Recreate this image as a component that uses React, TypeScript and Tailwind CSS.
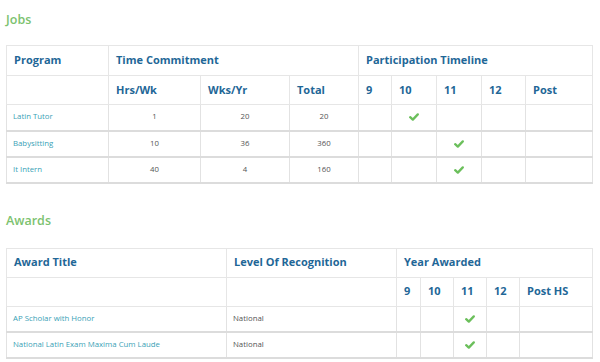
import React from 'react';

const font = { fontFamily: '"Open Sans", "Noto Sans", sans-serif' };

function Check() {
  return (
    <svg width="10" height="8" viewBox="0 0 10 8" className="mx-auto block">
      <path d="M1.2 4.2 L3.8 6.6 L8.8 1.4" fill="none" stroke="#6bbf5b" strokeWidth="2.3" strokeLinecap="round" strokeLinejoin="round" />
    </svg>
  );
}

const th = 'border border-[#e6e6e6] px-[7px] text-left align-middle text-[11px] font-bold text-[#1f6797]';
const td = 'border border-[#e2e2e2] align-middle text-[7.8px]';

const jobs = [
  { name: 'Latin Tutor', hrs: 1, wks: 20, total: 20, year: 1 },
  { name: 'Babysitting', hrs: 10, wks: 36, total: 360, year: 2 },
  { name: 'It Intern', hrs: 40, wks: 4, total: 160, year: 2 },
];

const awards = [
  { title: 'AP Scholar with Honor', level: 'National', year: 2 },
  { title: 'National Latin Exam Maxima Cum Laude', level: 'National', year: 2 },
];

export default function App() {
  return (
    <div className="h-[362px] w-[600px] overflow-hidden bg-white pl-[6px] pr-[8px]" style={font}>
      <h2 className="pt-[11px] text-[12.5px] font-semibold leading-[18px] text-[#7cc26f]">Jobs</h2>
      <table className="mt-[16px] w-[586px] table-fixed border-collapse">
        <colgroup>
          <col className="w-[102px]" />
          <col className="w-[92px]" />
          <col className="w-[89px]" />
          <col className="w-[69px]" />
          <col className="w-[33px]" />
          <col className="w-[45px]" />
          <col className="w-[45px]" />
          <col className="w-[44px]" />
          <col className="w-[67px]" />
        </colgroup>
        <thead>
          <tr className="h-[30px]">
            <th className={th}>Program</th>
            <th className={th} colSpan={3}>Time Commitment</th>
            <th className={th} colSpan={5}>Participation Timeline</th>
          </tr>
          <tr className="h-[29px]">
            <th className={th}></th>
            <th className={th}>Hrs/Wk</th>
            <th className={th}>Wks/Yr</th>
            <th className={th}>Total</th>
            <th className={th}>9</th>
            <th className={th}>10</th>
            <th className={th}>11</th>
            <th className={th}>12</th>
            <th className={th}>Post</th>
          </tr>
        </thead>
        <tbody>
          {jobs.map((j) => (
            <tr key={j.name} className="h-[26px] border-b-2 border-[#dcdcdc]">
              <td className={`${td} px-[6px] text-[#3a9fb6]`}>{j.name}</td>
              <td className={`${td} text-center text-[#555]`}>{j.hrs}</td>
              <td className={`${td} text-center text-[#555]`}>{j.wks}</td>
              <td className={`${td} text-center text-[#555]`}>{j.total}</td>
              {[0, 1, 2, 3, 4].map((i) => (
                <td key={i} className={td}>{i === j.year && <Check />}</td>
              ))}
            </tr>
          ))}
        </tbody>
      </table>

      <h2 className="mt-[28px] text-[12.5px] font-semibold leading-[18px] text-[#7cc26f]">Awards</h2>
      <table className="mt-[18px] w-[586px] table-fixed border-collapse">
        <colgroup>
          <col className="w-[220px]" />
          <col className="w-[170px]" />
          <col className="w-[24px]" />
          <col className="w-[33px]" />
          <col className="w-[33px]" />
          <col className="w-[33px]" />
          <col className="w-[73px]" />
        </colgroup>
        <thead>
          <tr className="h-[29px]">
            <th className={th}>Award Title</th>
            <th className={th}>Level Of Recognition</th>
            <th className={th} colSpan={5}>Year Awarded</th>
          </tr>
          <tr className="h-[29px]">
            <th className={th}></th>
            <th className={th}></th>
            <th className={th}>9</th>
            <th className={th}>10</th>
            <th className={th}>11</th>
            <th className={th}>12</th>
            <th className={th}>Post HS</th>
          </tr>
        </thead>
        <tbody>
          {awards.map((a) => (
            <tr key={a.title} className="h-[26px] border-b-2 border-[#dcdcdc]">
              <td className={`${td} px-[6px] text-[#3a9fb6]`}>{a.title}</td>
              <td className={`${td} px-[6px] text-[#555]`}>{a.level}</td>
              {[0, 1, 2, 3, 4].map((i) => (
                <td key={i} className={td}>{i === a.year && <Check />}</td>
              ))}
            </tr>
          ))}
        </tbody>
      </table>
    </div>
  );
}
